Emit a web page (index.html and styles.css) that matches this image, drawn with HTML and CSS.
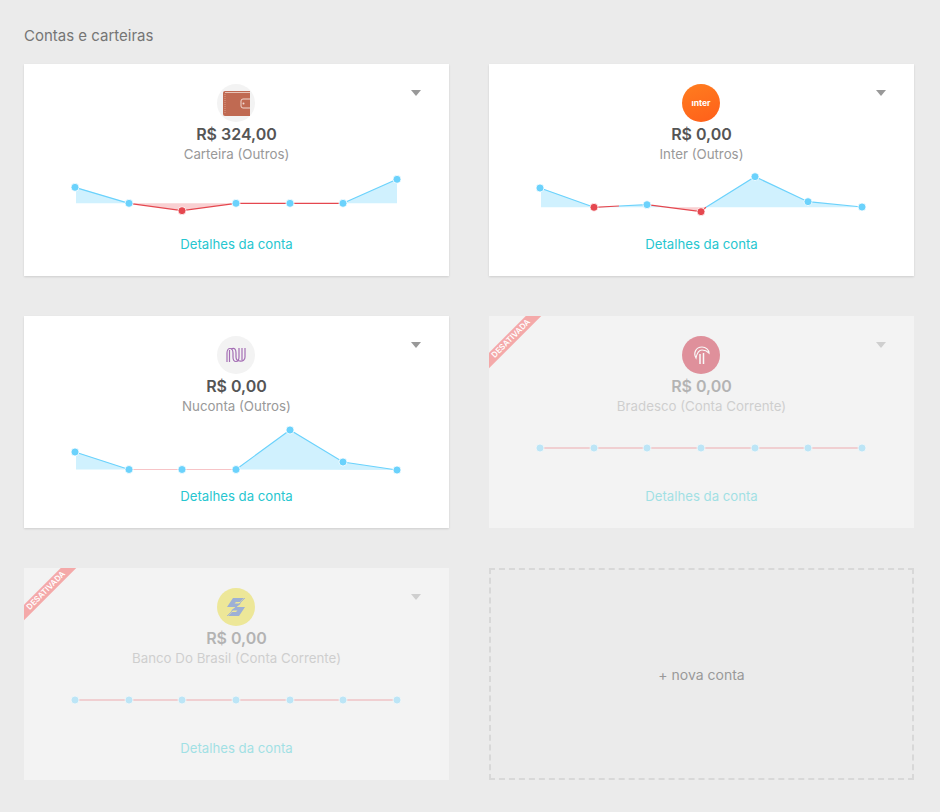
FILE: index.html
```html
<!doctype html>
<html lang="pt-BR">
  <head>
    <meta charset="UTF-8" />
    <title>Contas e carteiras</title>
    <link rel="stylesheet" href="styles.css">
  </head>
  <body>
    <h2 class="page-title">Contas e carteiras</h2>

    <div class="accounts">
      <div class="card">
        <span class="caret"></span>
        <div class="logo logo-wallet">
          <svg width="27" height="25" viewBox="0 0 27 25">
            <path d="M2 0h25v25H2a2 2 0 0 1-2-2V2a2 2 0 0 1 2-2z" fill="#c06a52" />
            <path d="M2 1.500h25" stroke="#e8c4b8" stroke-width="1" />
            <path d="M2 3v19" stroke="#e0a896" stroke-width="0.8" stroke-dasharray="1 1" />
            <path d="M27 8h-7a2 2 0 0 0-2 2v5a2 2 0 0 0 2 2h7" fill="#c06a52" stroke="#f0d8d0" stroke-width="1" />
            <circle cx="20.500" cy="12.500" r="1" fill="#f0d8d0" />
          </svg>
        </div>
        <div class="amount">R$ 324,00</div>
        <div class="name">Carteira (Outros)</div>
        <svg class="chart" viewBox="0 104 425 60">
          <polygon class="area" points="52,123.3 105,139.3 52,139.3" />
          <polygon class="area-neg" points="105,139.3 158,146.7 212,139.3" />
          <polygon class="area" points="319,139.3 373,115.3 373,139.3" />
          <polyline class="line" points="51,123.3 105,139.3" />
          <polyline class="line-neg" points="105,139.3 158,146.7 212,139.3 266,139.3 319,139.3" />
          <polyline class="line" points="319,139.3 373,115.3" />
          <circle class="dot" cx="51" cy="123.3" r="4" />
          <circle class="dot" cx="105" cy="139.3" r="4" />
          <circle class="dot-neg" cx="158" cy="146.7" r="4" />
          <circle class="dot" cx="212" cy="139.3" r="4" />
          <circle class="dot" cx="266" cy="139.3" r="4" />
          <circle class="dot" cx="319" cy="139.3" r="4" />
          <circle class="dot" cx="373" cy="115.3" r="4" />
        </svg>
        <a class="details" href="#">Detalhes da conta</a>
      </div>

      <div class="card">
        <span class="caret"></span>
        <div class="logo logo-inter"><span>ınter</span></div>
        <div class="amount">R$ 0,00</div>
        <div class="name">Inter (Outros)</div>
        <svg class="chart" viewBox="0 104 425 60">
          <polygon class="area" points="52,124 105,143.3 52,143.3" />
          <polygon class="area" points="105,143.3 158,140.7 185,143.3" />
          <polygon class="area-neg" points="178,143.3 212,147.7 217,143.3" />
          <polygon class="area" points="217,143.3 266,112.7 319,137.7 373,143.3" />
          <polyline class="line" points="51,124 105,143.3" />
          <polyline class="line-neg" points="105,143.3 130,142" />
          <polyline class="line" points="130,142 158,140.7" />
          <polyline class="line-neg" points="158,140.7 212,147.7 217,143.3" />
          <polyline class="line" points="217,143.3 266,112.7 319,137.7 373,143" />
          <circle class="dot" cx="51" cy="124" r="4" />
          <circle class="dot-neg" cx="105" cy="143.3" r="4" />
          <circle class="dot" cx="158" cy="140.7" r="4" />
          <circle class="dot-neg" cx="212" cy="147.7" r="4" />
          <circle class="dot" cx="266" cy="112.7" r="4" />
          <circle class="dot" cx="319" cy="137.7" r="4" />
          <circle class="dot" cx="373" cy="143" r="4" />
        </svg>
        <a class="details" href="#">Detalhes da conta</a>
      </div>

      <div class="card">
        <span class="caret"></span>
        <div class="logo logo-nu">
          <svg width="20" height="16" viewBox="0 0 20 16" fill="none" stroke="#a56fb5" stroke-width="1.200">
            <path d="M1 15V6c0-6 6-6 6 0v4c0 6 6 6 6 0V1" />
            <path d="M3.500 15V3" />
            <path d="M5 2c4-2 5 1 5 4v4c0 5 9 6 9 0V1" />
            <path d="M16 1v12" />
          </svg>
        </div>
        <div class="amount">R$ 0,00</div>
        <div class="name">Nuconta (Outros)</div>
        <svg class="chart" viewBox="0 104 425 60">
          <polygon class="area" points="52,136 105,153.500 52,153.500" />
          <polygon class="area" points="212,153.500 266,114 319,146 373,154" />
          <polyline class="line" points="51,136 105,153.500" />
          <polyline class="line-flat" points="105,153.500 212,153.500" />
          <polyline class="line" points="212,153.500 266,114 319,146 373,154" />
          <circle class="dot" cx="51" cy="136" r="4" />
          <circle class="dot" cx="105" cy="153.500" r="4" />
          <circle class="dot" cx="158" cy="153.500" r="4" />
          <circle class="dot" cx="212" cy="153.500" r="4" />
          <circle class="dot" cx="266" cy="114" r="4" />
          <circle class="dot" cx="319" cy="146" r="4" />
          <circle class="dot" cx="373" cy="154" r="4" />
        </svg>
        <a class="details" href="#">Detalhes da conta</a>
      </div>

      <div class="card disabled">
        <div class="ribbon">DESATIVADA</div>
        <span class="caret"></span>
        <div class="logo logo-bradesco">
          <svg width="17" height="18" viewBox="0 0 17 18" fill="none" stroke="#fff">
            <path d="M3 12C0 7 3 1 9 1c4 0 7 3 7 6-2-2-4-3-7-3-3 0-5 3-6 8z" stroke-width="1.200" />
            <path d="M7 8v10M10.500 7v11" stroke-width="1.500" />
          </svg>
        </div>
        <div class="amount">R$ 0,00</div>
        <div class="name">Bradesco (Conta Corrente)</div>
        <svg class="chart" viewBox="0 104 425 60">
          <polyline class="line-off" points="51,132 373,132" />
          <circle class="dot" cx="51" cy="132" r="4" />
          <circle class="dot" cx="105" cy="132" r="4" />
          <circle class="dot" cx="158" cy="132" r="4" />
          <circle class="dot" cx="212" cy="132" r="4" />
          <circle class="dot" cx="266" cy="132" r="4" />
          <circle class="dot" cx="319" cy="132" r="4" />
          <circle class="dot" cx="373" cy="132" r="4" />
        </svg>
        <a class="details" href="#">Detalhes da conta</a>
      </div>

      <div class="card disabled">
        <div class="ribbon">DESATIVADA</div>
        <span class="caret"></span>
        <div class="logo logo-bb">
          <svg width="20" height="20" viewBox="0 0 20 20">
            <path d="M7 1h11l-4 4h-4L8.500 6.500H15L10.500 10H1z" fill="#4a6fb8" />
            <path d="M13 19H2l4-4h4l1.500-1.500H5L9.500 10H19z" fill="#4a6fb8" />
            <path d="M1 19L19 1" stroke="#4a6fb8" stroke-width="0.800" />
          </svg>
        </div>
        <div class="amount">R$ 0,00</div>
        <div class="name">Banco Do Brasil (Conta Corrente)</div>
        <svg class="chart" viewBox="0 104 425 60">
          <polyline class="line-off" points="51,132 373,132" />
          <circle class="dot" cx="51" cy="132" r="4" />
          <circle class="dot" cx="105" cy="132" r="4" />
          <circle class="dot" cx="158" cy="132" r="4" />
          <circle class="dot" cx="212" cy="132" r="4" />
          <circle class="dot" cx="266" cy="132" r="4" />
          <circle class="dot" cx="319" cy="132" r="4" />
          <circle class="dot" cx="373" cy="132" r="4" />
        </svg>
        <a class="details" href="#">Detalhes da conta</a>
      </div>

      <a class="new-account" href="#">+ nova conta</a>
    </div>
  </body>
</html>
```

FILE: styles.css
```css
body {
  margin: 0;
  padding: 26px 24px 32px;
  background: #ebebeb;
  font-family: "Inter", sans-serif;
}
.page-title {
  margin: 0 0 20px;
  padding-top: 1px;
  font-size: 15px;
  line-height: 17px;
  font-weight: 400;
  color: #757575;
}
.accounts {
  display: grid;
  grid-template-columns: 425px 425px;
  grid-auto-rows: 212px;
  gap: 40px;
}
.card {
  position: relative;
  overflow: hidden;
  display: flex;
  flex-direction: column;
  align-items: center;
  padding-top: 20px;
  box-sizing: border-box;
  background: white;
  box-shadow: 0 1px 2px rgba(0, 0, 0, 0.12);
}
.caret {
  position: absolute;
  top: 26px;
  right: 28px;
  border-left: 5px solid transparent;
  border-right: 5px solid transparent;
  border-top: 6px solid #999;
}
.logo {
  display: flex;
  align-items: center;
  justify-content: center;
  width: 38px;
  height: 38px;
  margin-right: 1px;
  border-radius: 50%;
  background: #f3f3f3;
}
.logo-wallet svg {
  margin-left: 1px;
}
.logo-inter {
  background: linear-gradient(160deg, #ff7d1f, #ff5f1a);
  color: white;
  font-size: 8.500px;
  font-weight: 700;
}
.logo-bradesco {
  background: #cc3045;
}
.logo-bb {
  background: #e8dc40;
}
.amount {
  font-size: 16px;
  line-height: 24px;
  font-weight: 600;
  color: #555;
}
.name {
  font-size: 13.300px;
  line-height: 16px;
  color: #999;
}
.chart {
  display: block;
  width: 425px;
  height: 60px;
  margin-top: 6px;
  overflow: visible;
}
.area {
  fill: #d0f1fe;
}
.area-neg {
  fill: #f9d0d2;
}
.line,
.line-neg,
.line-flat,
.line-off {
  fill: none;
  stroke-width: 1.200;
}
.line {
  stroke: #6bd2fc;
}
.line-flat {
  stroke: #f7c4c7;
}
.line-neg {
  stroke: #e5474f;
}
.line-off {
  stroke: #e5474f;
}
.dot,
.dot-neg {
  stroke: white;
  stroke-width: 0.800;
}
.dot {
  fill: #6bd2fc;
}
.dot-neg {
  fill: #e5474f;
}
.details {
  margin-top: 7px;
  font-size: 13.200px;
  line-height: 18px;
  color: #26c6d0;
  text-decoration: none;
}
.disabled {
  background: #f3f3f3;
  box-shadow: none;
}
.disabled > *:not(.ribbon) {
  opacity: 0.4;
}
.disabled > .logo {
  opacity: 0.5;
}
.ribbon {
  position: absolute;
  top: 17px;
  left: -22px;
  width: 88px;
  height: 11px;
  background: #f4a9a9;
  color: white;
  font-size: 8px;
  font-weight: 600;
  line-height: 11px;
  text-align: center;
  transform: rotate(-45deg);
}
.new-account {
  display: flex;
  align-items: center;
  justify-content: center;
  padding-top: 1px;
  border: 2px dashed #d8d8d8;
  color: #999;
  font-size: 14px;
  text-decoration: none;
}
```
